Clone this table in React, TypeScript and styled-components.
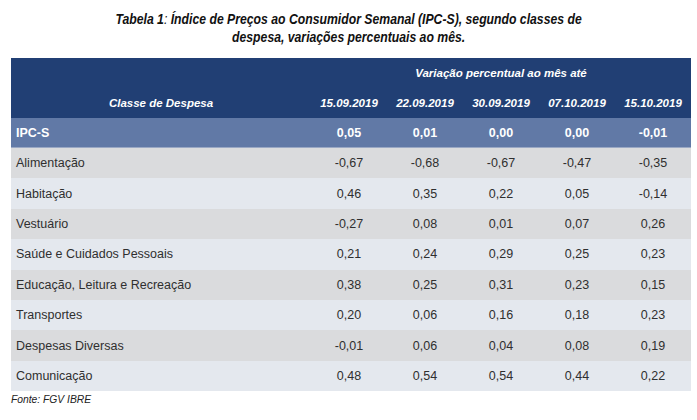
import React from "react";
import styled, { createGlobalStyle } from "styled-components";

const Global = createGlobalStyle`
  html, body { margin: 0; padding: 0; background: #ffffff; }
  body { font-family: "Liberation Sans", Arial, sans-serif; }
`;

const Page = styled.div`
  width: 697px;
  height: 420px;
  background: #fff;
  padding: 10px 0 0 11px;
  box-sizing: border-box;
`;

const Title = styled.h1`
  margin: 0 0 0 -11px;
  width: 697px;
  text-align: center;
  font-family: "Liberation Sans", Arial, sans-serif;
  font-size: 15px;
  line-height: 18px;
  font-style: italic;
  font-weight: bold;
  color: #111;
  transform: scaleX(0.815);
  transform-origin: 349px 0;
  white-space: nowrap;
`;

const Colon = styled.span`
  font-weight: normal;
`;

const Table = styled.div`
  margin-top: 12px;
  width: 680px;
  display: grid;
  grid-template-columns: 300px repeat(5, 76px);
`;

const HeadCell = styled.div<{ $span?: number }>`
  grid-column: ${(p) => (p.$span ? `span ${p.$span}` : "auto")};
  background: #213f74;
  color: #fff;
  height: 30px;
  display: flex;
  align-items: center;
  justify-content: center;
  font-family: "Liberation Sans", Arial, sans-serif;
  font-style: italic;
  font-weight: bold;
  font-size: 11.5px;
`;

const Cell = styled.div<{ $kind: "main" | "odd" | "even"; $label?: boolean }>`
  height: ${(p) => (p.$kind === "main" ? "30px" : "30.4px")};
  display: flex;
  align-items: center;
  justify-content: ${(p) => (p.$label ? "flex-start" : "center")};
  padding-left: ${(p) => (p.$label ? "5px" : "0")};
  background: ${(p) =>
    p.$kind === "main" ? "#6179a6" : p.$kind === "odd" ? "#dadbdd" : "#e4e8ee"};
  color: ${(p) => (p.$kind === "main" ? "#fff" : "#2f2f2f")};
  font-weight: ${(p) => (p.$kind === "main" ? "bold" : "normal")};
  font-size: 12.5px;
  font-family: "Liberation Sans", Arial, sans-serif;
  border-bottom: ${(p) => (p.$kind === "main" ? "1px solid #9aa8c4" : "none")};
  box-sizing: border-box;
`;

const Source = styled.div`
  margin-top: 3px;
  font-style: italic;
  font-size: 10.3px;
  color: #222;
  font-family: "Liberation Sans", Arial, sans-serif;
`;

const dates = ["15.09.2019", "22.09.2019", "30.09.2019", "07.10.2019", "15.10.2019"];

const rows: [string, string[]][] = [
  ["IPC-S", ["0,05", "0,01", "0,00", "0,00", "-0,01"]],
  ["Alimentação", ["-0,67", "-0,68", "-0,67", "-0,47", "-0,35"]],
  ["Habitação", ["0,46", "0,35", "0,22", "0,05", "-0,14"]],
  ["Vestuário", ["-0,27", "0,08", "0,01", "0,07", "0,26"]],
  ["Saúde e Cuidados Pessoais", ["0,21", "0,24", "0,29", "0,25", "0,23"]],
  ["Educação, Leitura e Recreação", ["0,38", "0,25", "0,31", "0,23", "0,15"]],
  ["Transportes", ["0,20", "0,06", "0,16", "0,18", "0,23"]],
  ["Despesas Diversas", ["-0,01", "0,06", "0,04", "0,08", "0,19"]],
  ["Comunicação", ["0,48", "0,54", "0,54", "0,44", "0,22"]],
];

export default function App() {
  return (
    <Page>
      <Global />
      <Title>
        Tabela 1<Colon>:</Colon> Índice de Preços ao Consumidor Semanal (IPC-S), segundo classes de
        <br />
        despesa, variações percentuais ao mês.
      </Title>
      <Table>
        <HeadCell />
        <HeadCell $span={5}>Variação percentual ao mês até</HeadCell>
        <HeadCell>Classe de Despesa</HeadCell>
        {dates.map((d) => (
          <HeadCell key={d}>{d}</HeadCell>
        ))}
        {rows.map(([label, vals], i) => {
          const kind = i === 0 ? "main" : i % 2 === 1 ? "odd" : "even";
          return (
            <React.Fragment key={label}>
              <Cell $kind={kind} $label>
                {label}
              </Cell>
              {vals.map((v, j) => (
                <Cell key={j} $kind={kind}>
                  {v}
                </Cell>
              ))}
            </React.Fragment>
          );
        })}
      </Table>
      <Source>Fonte: FGV IBRE</Source>
    </Page>
  );
}
